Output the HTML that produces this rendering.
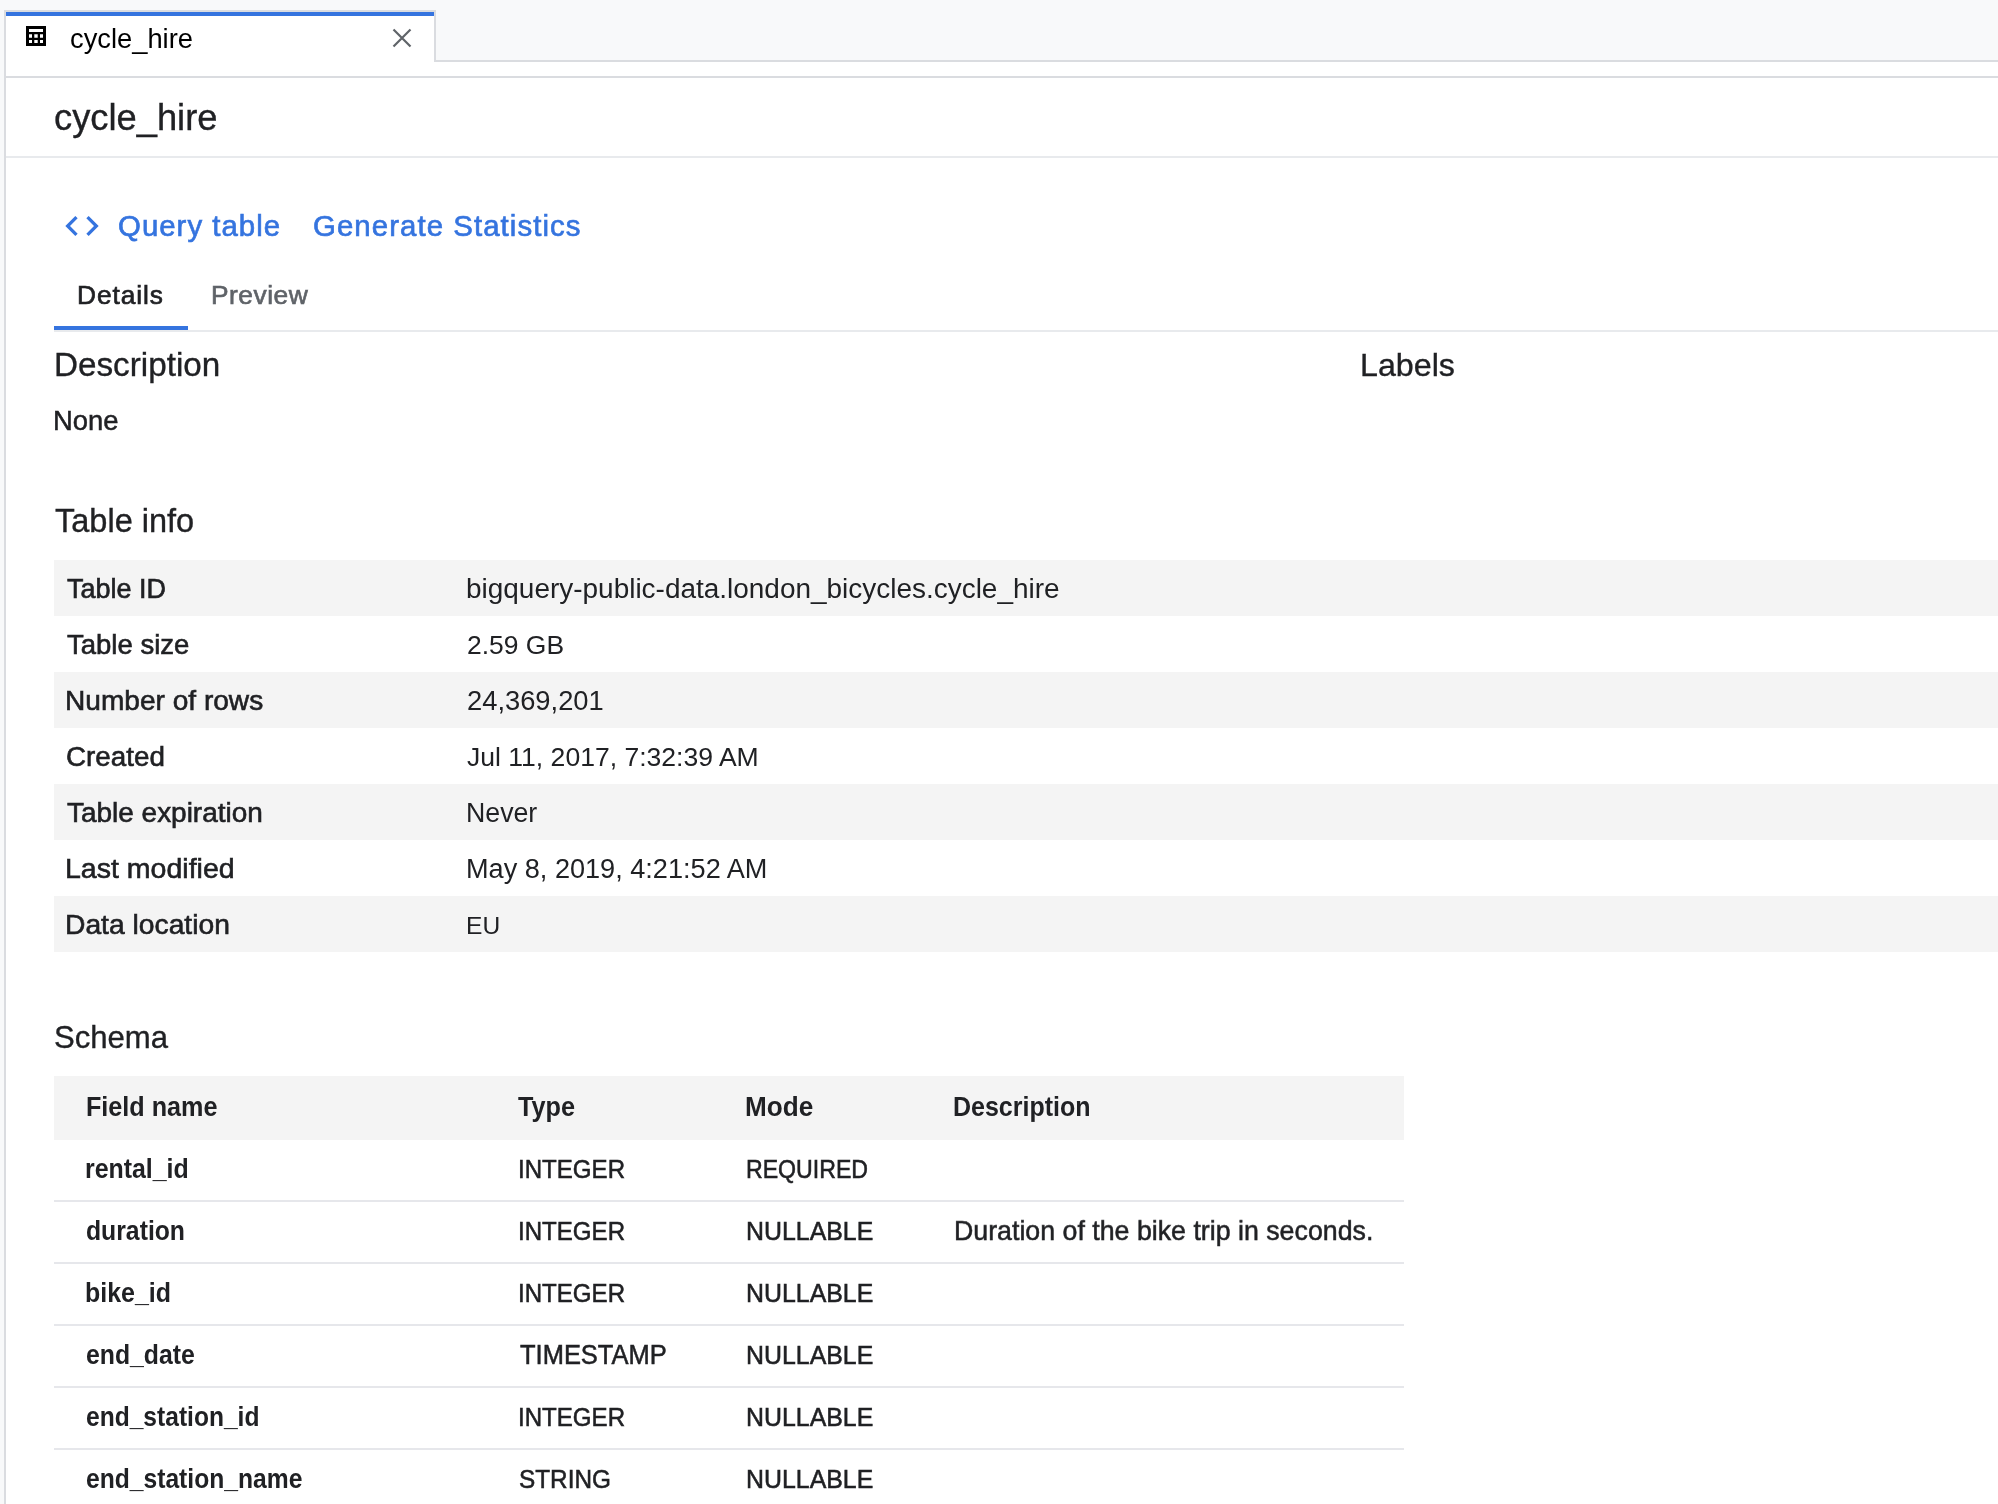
<!DOCTYPE html>
<html><head><meta charset="utf-8"><title>cycle_hire</title>
<style>
*{margin:0;padding:0;box-sizing:border-box}
html,body{width:1998px;height:1504px;overflow:hidden;background:#fff}
body{position:relative;font-family:"Liberation Sans",sans-serif;color:#202124}
.t{position:absolute;white-space:nowrap;line-height:1;will-change:transform}
.r{position:absolute}
.bl{display:inline-block;width:0;height:0;vertical-align:baseline}
.med2{-webkit-text-stroke:0.65px currentColor}
.med3{-webkit-text-stroke:0.5px currentColor}
.hd{-webkit-text-stroke:0.35px currentColor}
.med{-webkit-text-stroke:0.6px currentColor}
</style></head><body>
<div class="r" style="left:0px;top:0px;width:1998px;height:62px;background:#f8f9fa"></div>
<div class="r" style="left:0px;top:0px;width:4px;height:1504px;background:#f8f9fa"></div>
<div class="r" style="left:4px;top:10px;width:2px;height:1494px;background:#dadce0"></div>
<div class="r" style="left:4px;top:10px;width:432px;height:2px;background:#dadce0"></div>
<div class="r" style="left:6px;top:12px;width:428px;height:50px;background:#fff"></div>
<div class="r" style="left:6px;top:12px;width:428px;height:4px;background:#3574df"></div>
<div class="r" style="left:434px;top:10px;width:2px;height:52px;background:#dadce0"></div>
<div class="r" style="left:434px;top:60px;width:1564px;height:2px;background:#dadce0"></div>
<div class="r" style="left:6px;top:62px;width:1992px;height:1442px;background:#fff"></div>
<div class="r" style="left:6px;top:76px;width:1992px;height:2px;background:#dadce0"></div>
<div class="r" style="left:6px;top:156px;width:1992px;height:2px;background:#e8eaed"></div>
<svg class="r" style="left:26px;top:26px" width="20" height="20" viewBox="0 0 20 20">
<path fill="#000" fill-rule="evenodd" d="M0 0H20V20H0Z M3 3V6H17V3Z M3 8.3V11.7H6V8.3Z M8.3 8.3V11.7H11.7V8.3Z M14 8.3V11.7H17V8.3Z M3 14V17H6V14Z M8.3 14V17H11.7V14Z M14 14V17H17V14Z"/>
</svg>
<svg class="r" style="left:392px;top:28px" width="20" height="20" viewBox="0 0 20 20">
<path stroke="#5f6368" stroke-width="2.2" d="M1.5 1.5L18.5 18.5M18.5 1.5L1.5 18.5"/>
</svg>
<svg class="r" style="left:62px;top:206px" width="40" height="40" viewBox="0 0 24 24">
<path fill="#3574df" d="M9.4 16.6L4.8 12l4.6-4.6L8 6l-6 6 6 6 1.4-1.4zm5.2 0l4.6-4.6-4.6-4.6L16 6l6 6-6 6-1.4-1.4z"/>
</svg>
<div class="r" style="left:54px;top:330px;width:1944px;height:2px;background:#e8eaed"></div>
<div class="r" style="left:54px;top:326px;width:134px;height:4px;background:#3574df"></div>
<div class="r" style="left:54px;top:560px;width:1944px;height:56px;background:#f4f4f4"></div>
<div class="r" style="left:54px;top:672px;width:1944px;height:56px;background:#f4f4f4"></div>
<div class="r" style="left:54px;top:784px;width:1944px;height:56px;background:#f4f4f4"></div>
<div class="r" style="left:54px;top:896px;width:1944px;height:56px;background:#f4f4f4"></div>
<div class="r" style="left:54px;top:1076px;width:1350px;height:64px;background:#f4f4f4"></div>
<div class="r" style="left:54px;top:1200px;width:1350px;height:2px;background:#e6e7eb"></div>
<div class="r" style="left:54px;top:1262px;width:1350px;height:2px;background:#e6e7eb"></div>
<div class="r" style="left:54px;top:1324px;width:1350px;height:2px;background:#e6e7eb"></div>
<div class="r" style="left:54px;top:1386px;width:1350px;height:2px;background:#e6e7eb"></div>
<div class="r" style="left:54px;top:1448px;width:1350px;height:2px;background:#e6e7eb"></div>
<div class="r" style="left:54px;top:1510px;width:1350px;height:2px;background:#e6e7eb"></div>
<div id="tab" class="t" style="left:70.10px;top:24.99px;font-size:27.32px;color:#000;">cycle_hire<i class="bl"></i></div>
<div id="title" class="t hd" style="left:54.20px;top:99.96px;font-size:36.31px;color:#202124;">cycle_hire<i class="bl"></i></div>
<div id="qt" class="t med2" style="left:117.50px;top:211.00px;font-size:29.40px;color:#3574df;letter-spacing:1.020px;">Query table<i class="bl"></i></div>
<div id="gs" class="t med2" style="left:313.00px;top:211.00px;font-size:29.40px;color:#3574df;letter-spacing:1.066px;">Generate Statistics<i class="bl"></i></div>
<div id="det" class="t med2" style="left:77.10px;top:282.00px;font-size:26.30px;color:#202124;letter-spacing:0.932px;">Details<i class="bl"></i></div>
<div id="prev" class="t med2" style="left:210.50px;top:282.00px;font-size:26.30px;color:#5f6368;letter-spacing:0.537px;">Preview<i class="bl"></i></div>
<div id="desc" class="t hd" style="left:54.00px;top:347.97px;font-size:33.24px;color:#202124;">Description<i class="bl"></i></div>
<div id="labels" class="t hd" style="left:1360.00px;top:349.01px;font-size:32.21px;color:#202124;">Labels<i class="bl"></i></div>
<div id="none" class="t med3" style="left:53.00px;top:406.90px;font-size:27.40px;color:#202124;">None<i class="bl"></i></div>
<div id="tinfo" class="t hd" style="left:55.00px;top:505.01px;font-size:32.53px;color:#202124;">Table info<i class="bl"></i></div>
<div id="k0" class="t med" style="left:67.00px;top:575.85px;font-size:26.99px;color:#202124;">Table ID<i class="bl"></i></div>
<div id="v0" class="t" style="left:465.60px;top:575.02px;font-size:27.96px;color:#202124;">bigquery-public-data.london_bicycles.cycle_hire<i class="bl"></i></div>
<div id="k1" class="t med" style="left:67.00px;top:631.00px;font-size:27.50px;color:#202124;">Table size<i class="bl"></i></div>
<div id="v1" class="t" style="left:466.60px;top:632.03px;font-size:26.46px;color:#202124;">2.59 GB<i class="bl"></i></div>
<div id="k2" class="t med" style="left:65.00px;top:686.95px;font-size:28.08px;color:#202124;">Number of rows<i class="bl"></i></div>
<div id="v2" class="t" style="left:466.60px;top:687.01px;font-size:27.32px;color:#202124;">24,369,201<i class="bl"></i></div>
<div id="k3" class="t med" style="left:66.00px;top:742.90px;font-size:27.79px;color:#202124;">Created<i class="bl"></i></div>
<div id="v3" class="t" style="left:466.60px;top:744.00px;font-size:26.56px;color:#202124;">Jul 11, 2017, 7:32:39 AM<i class="bl"></i></div>
<div id="k4" class="t med" style="left:67.00px;top:798.95px;font-size:27.96px;color:#202124;">Table expiration<i class="bl"></i></div>
<div id="v4" class="t" style="left:465.60px;top:800.20px;font-size:26.73px;color:#202124;">Never<i class="bl"></i></div>
<div id="k5" class="t med" style="left:65.00px;top:854.01px;font-size:28.53px;color:#202124;">Last modified<i class="bl"></i></div>
<div id="v5" class="t" style="left:465.60px;top:855.02px;font-size:27.11px;color:#202124;">May 8, 2019, 4:21:52 AM<i class="bl"></i></div>
<div id="k6" class="t med" style="left:65.00px;top:910.07px;font-size:28.26px;color:#202124;">Data location<i class="bl"></i></div>
<div id="v6" class="t" style="left:465.60px;top:914.13px;font-size:24.58px;color:#202124;">EU<i class="bl"></i></div>
<div id="schema" class="t hd" style="left:53.80px;top:1022.04px;font-size:31.10px;color:#202124;">Schema<i class="bl"></i></div>
<div id="h0" class="t" style="left:85.80px;top:1094.97px;font-size:25.17px;color:#202124;transform-origin:0 21.31px;transform:scaleY(1.0828);font-weight:700;">Field name<i class="bl"></i></div>
<div id="h1" class="t" style="left:517.50px;top:1094.97px;font-size:25.25px;color:#202124;transform-origin:0 21.37px;transform:scaleY(1.0793);font-weight:700;">Type<i class="bl"></i></div>
<div id="h2" class="t" style="left:745.00px;top:1094.01px;font-size:26.11px;color:#202124;transform-origin:0 22.10px;transform:scaleY(1.0438);font-weight:700;">Mode<i class="bl"></i></div>
<div id="h3" class="t" style="left:952.50px;top:1095.16px;font-size:25.00px;color:#202124;transform-origin:0 21.16px;transform:scaleY(1.0901);font-weight:700;">Description<i class="bl"></i></div>
<div id="f0" class="t" style="left:84.50px;top:1156.99px;font-size:24.90px;color:#202124;transform-origin:0 21.08px;transform:scaleY(1.0938);font-weight:700;">rental_id<i class="bl"></i></div>
<div id="t0" class="t med3" style="left:517.60px;top:1157.91px;font-size:24.09px;color:#202124;transform-origin:0 20.39px;transform:scaleY(1.1070);">INTEGER<i class="bl"></i></div>
<div id="m0" class="t med3" style="left:746.00px;top:1159.10px;font-size:23.14px;color:#202124;transform-origin:0 19.59px;transform:scaleY(1.1510);">REQUIRED<i class="bl"></i></div>
<div id="f1" class="t" style="left:85.50px;top:1220.14px;font-size:24.75px;color:#202124;transform-origin:0 20.95px;transform:scaleY(1.1004);font-weight:700;">duration<i class="bl"></i></div>
<div id="t1" class="t med3" style="left:517.60px;top:1219.91px;font-size:24.09px;color:#202124;transform-origin:0 20.39px;transform:scaleY(1.1070);">INTEGER<i class="bl"></i></div>
<div id="m1" class="t med3" style="left:746.00px;top:1219.01px;font-size:24.90px;color:#202124;transform-origin:0 21.08px;transform:scaleY(1.0720);">NULLABLE<i class="bl"></i></div>
<div id="d1" class="t med3" style="left:954.00px;top:1218.00px;font-size:26.76px;color:#202124;transform-origin:0 22.65px;transform:scaleY(0.9941);">Duration of the bike trip in seconds.<i class="bl"></i></div>
<div id="f2" class="t" style="left:84.50px;top:1281.05px;font-size:24.96px;color:#202124;transform-origin:0 21.13px;transform:scaleY(1.0911);font-weight:700;">bike_id<i class="bl"></i></div>
<div id="t2" class="t med3" style="left:517.60px;top:1281.91px;font-size:24.09px;color:#202124;transform-origin:0 20.39px;transform:scaleY(1.1070);">INTEGER<i class="bl"></i></div>
<div id="m2" class="t med3" style="left:746.00px;top:1281.01px;font-size:24.90px;color:#202124;transform-origin:0 21.08px;transform:scaleY(1.0720);">NULLABLE<i class="bl"></i></div>
<div id="f3" class="t" style="left:85.50px;top:1344.00px;font-size:24.77px;color:#202124;transform-origin:0 20.97px;transform:scaleY(1.0995);font-weight:700;">end_date<i class="bl"></i></div>
<div id="t3" class="t med3" style="left:519.60px;top:1343.08px;font-size:25.49px;color:#202124;transform-origin:0 21.58px;transform:scaleY(1.0478);">TIMESTAMP<i class="bl"></i></div>
<div id="m3" class="t med3" style="left:746.00px;top:1343.01px;font-size:24.90px;color:#202124;transform-origin:0 21.08px;transform:scaleY(1.0720);">NULLABLE<i class="bl"></i></div>
<div id="f4" class="t" style="left:85.50px;top:1406.03px;font-size:24.59px;color:#202124;transform-origin:0 20.82px;transform:scaleY(1.1075);font-weight:700;">end_station_id<i class="bl"></i></div>
<div id="t4" class="t med3" style="left:517.60px;top:1405.91px;font-size:24.09px;color:#202124;transform-origin:0 20.39px;transform:scaleY(1.1070);">INTEGER<i class="bl"></i></div>
<div id="m4" class="t med3" style="left:746.00px;top:1405.01px;font-size:24.90px;color:#202124;transform-origin:0 21.08px;transform:scaleY(1.0720);">NULLABLE<i class="bl"></i></div>
<div id="f5" class="t" style="left:85.50px;top:1468.05px;font-size:24.65px;color:#202124;transform-origin:0 20.87px;transform:scaleY(1.1049);font-weight:700;">end_station_name<i class="bl"></i></div>
<div id="t5" class="t med3" style="left:518.60px;top:1468.02px;font-size:24.34px;color:#202124;transform-origin:0 20.60px;transform:scaleY(1.0959);">STRING<i class="bl"></i></div>
<div id="m5" class="t med3" style="left:746.00px;top:1467.01px;font-size:24.90px;color:#202124;transform-origin:0 21.08px;transform:scaleY(1.0720);">NULLABLE<i class="bl"></i></div>
</body></html>
